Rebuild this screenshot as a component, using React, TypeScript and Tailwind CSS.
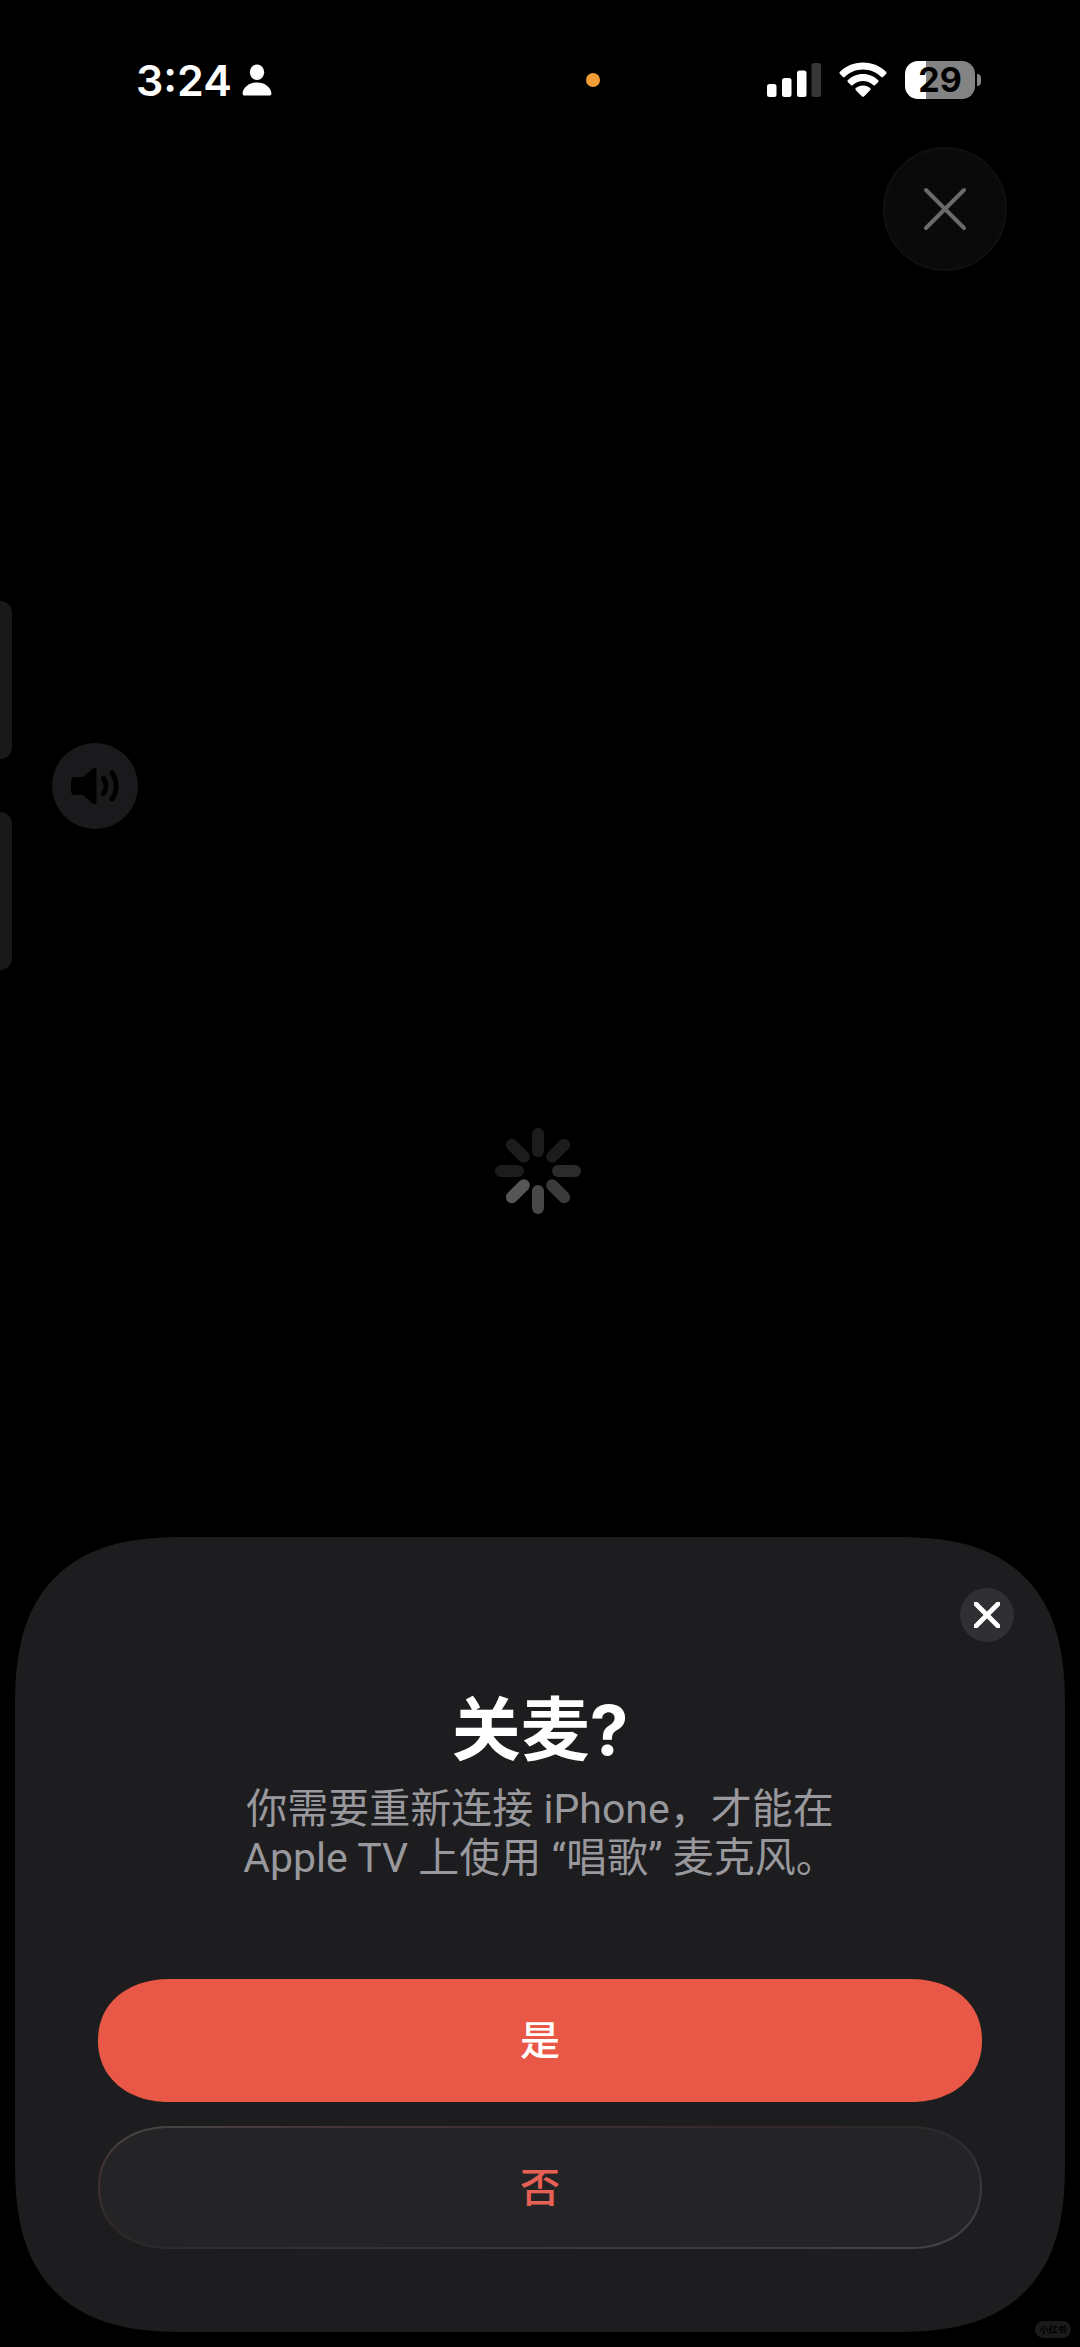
import type { ReactNode } from "react";

const petals = [
    { angle: 0, color: "#1c1c1c" },
    { angle: 45, color: "#1c1c1c" },
    { angle: 90, color: "#2b2b2b" },
    { angle: 135, color: "#3a3a3a" },
    { angle: 180, color: "#484848" },
    { angle: 225, color: "#565656" },
    { angle: 270, color: "#1c1c1c" },
    { angle: 315, color: "#1c1c1c" },
];

function Cross({ className, width }: { className: string; width: number }) {
    return (
        <svg viewBox="0 0 44 44" className={className} fill="none" stroke="currentColor" strokeWidth={width} strokeLinecap="round" aria-hidden="true">
            <path d="M3 3l38 38M41 3L3 41" />
        </svg>
    );
}

function StatusBar() {
    return (
        <header className="flex h-40 items-center pl-[136px] pr-[99px] text-white">
            <time className="text-[43px] leading-none font-semibold">3:24</time>
            <svg viewBox="0 0 30 32" className="ml-[10px] h-8 w-[30px]" fill="currentColor" aria-hidden="true">
                <ellipse cx="15" cy="8.2" rx="7.2" ry="7.8" />
                <path d="M3 31.5C1.200 31.500 .4 30.600 .6 29C1.200 23.500 7 18.500 15 18.500s13.800 5 14.400 10.500c.2 1.600-.6 2.500-2.400 2.500z" />
            </svg>
            <span className="ml-[314px] size-[14px] rounded-full bg-[#f29d38]" />

            <div className="ml-auto flex items-center">
                <svg viewBox="0 0 54 38" className="h-[38px] w-[54px]" fill="currentColor" aria-hidden="true">
                    <rect x="0" y="23" width="9.500" height="13" rx="2.500" />
                    <rect x="15" y="17" width="9.500" height="19" rx="2.500" />
                    <rect x="30" y="9.500" width="9.500" height="26.500" rx="2.500" />
                    <rect x="44.500" y="2" width="9.500" height="34" rx="2.500" fill="#363636" />
                </svg>
                <svg viewBox="0 0 48 38" className="ml-[18px] h-[38px] w-12" fill="currentColor" aria-hidden="true">
                    <path d="M24 1.500C33.500 1.500 41.500 5.200 47 10.800c.7.7.7 1.500 0 2.200l-2.700 2.700c-.7.7-1.500.7-2.200 0C37.500 11.300 31 8.500 24 8.500S10.500 11.300 5.900 15.700c-.7.7-1.500.7-2.200 0L1 13c-.7-.7-.7-1.500 0-2.200C6.500 5.200 14.500 1.500 24 1.500z" />
                    <path d="M24 13c6.200 0 11.200 2.400 15 6 .7.700.7 1.500 0 2.200l-2.800 2.800c-.7.7-1.400.7-2.100.1C31.200 21.500 27.800 20 24 20s-7.200 1.500-10.100 4.100c-.7.6-1.400.6-2.100-.1L9 21.200c-.7-.7-.7-1.500 0-2.200 3.800-3.600 8.800-6 15-6z" />
                    <path d="M24 24.500c2.800 0 5.200 1 7.100 2.600.7.600.7 1.400 0 2.100l-5.900 6c-.8.8-1.600.8-2.400 0l-5.900-6c-.7-.7-.7-1.500 0-2.100 1.900-1.600 4.300-2.600 7.100-2.600z" />
                </svg>
                <div className="ml-[18px] flex h-[38px] w-[70px] items-center justify-center rounded-[13px] bg-linear-to-r from-white from-30% to-[#838383] to-30% text-[34px] leading-none font-bold text-black">
                    29
                </div>
                <span className="ml-[2px] h-3 w-1 rounded-r-full bg-[#838383]" />
            </div>
        </header>
    );
}

function Spinner() {
    return (
        <svg viewBox="-44 -44 88 88" className="mt-[157px] mr-1 size-[88px] self-center" role="status" aria-label="加载中">
            {petals.map((p) => (
                <rect key={p.angle} x="-6" y="-43" width="12" height="29" rx="6" fill={p.color} transform={`rotate(${p.angle})`} />
            ))}
        </svg>
    );
}

function SheetButton({ className, children }: { className: string; children: ReactNode }) {
    return (
        <button
            type="button"
            className={`h-[123px] w-full rounded-full text-[40px] leading-none font-medium supports-[corner-shape:round]:rounded-[72px/61px] supports-[corner-shape:round]:[corner-shape:superellipse(1.1)] ${className}`}
        >
            {children}
        </button>
    );
}

function MicSheet() {
    return (
        <section
            role="dialog"
            aria-labelledby="mic-title"
            className="mx-[15px] mt-auto mb-[15px] flex flex-col rounded-[136px] bg-[#1d1d1f] px-[83px] pt-[51px] pb-[83px] supports-[corner-shape:round]:rounded-[172px] supports-[corner-shape:round]:[corner-shape:superellipse(1.38)]"
        >
            <button type="button" aria-label="关闭" className="-mr-8 flex size-[54px] items-center justify-center self-end rounded-full bg-[#303034] text-white">
                <Cross className="size-[26px]" width={8} />
            </button>

            <h1 id="mic-title" className="mt-12 text-center text-[69px] leading-[80px] font-bold text-white">关麦?</h1>
            <p className="mt-[15px] text-center font-['Roboto','Noto_Sans_CJK_SC',sans-serif] text-[41px] leading-[49px] text-[#98989d]">
                你需要重新连接 iPhone，才能在
                <br />
                Apple TV 上使用 “唱歌” 麦克风。
            </p>

            <div className="mt-24 flex flex-col gap-6">
                <SheetButton className="bg-[#e95846] text-white">是</SheetButton>
                <SheetButton className="border-2 border-transparent text-[#e66153] [background:linear-gradient(#242426,#242426)_padding-box,linear-gradient(to_bottom_right,#4a4a4c,#433334_15%,#33292a_40%,#2a2a2c_50%,#38383a_75%,#444446)_border-box]">
                    否
                </SheetButton>
            </div>
        </section>
    );
}

export default function App() {
    return (
        <div className="relative flex min-h-screen flex-col overflow-hidden bg-black font-['Inter','Noto_Sans_CJK_SC',sans-serif]">
            <StatusBar />

            <button type="button" aria-label="关闭" className="-mt-[13px] mr-[73px] flex size-[124px] items-center justify-center self-end rounded-full border-2 border-[#101010] bg-[#0a0a0a] text-[#6a6a6a]">
                <Cross className="size-11" width={4} />
            </button>

            <div className="mt-[330px] flex items-center gap-10">
                <div className="flex flex-col gap-[53px]">
                    <div className="h-[158px] w-3 rounded-r-xl bg-[#19191a]" />
                    <div className="h-[158px] w-3 rounded-r-xl bg-[#19191a]" />
                </div>
                <button type="button" aria-label="音量" className="flex size-[86px] items-center justify-center rounded-full bg-[#1a1a1c] text-black">
                    <svg viewBox="0 0 48 36" className="h-9 w-12" aria-hidden="true">
                        <path fill="currentColor" d="M4 9h7c.7 0 1.200-.2 1.700-.6l8.300-7.300C21.800.4 22.500 0 23.500 0c1.300 0 2 .8 2 2v32c0 1.200-.7 2-2 2-1 0-1.700-.4-2.500-1.100l-8.300-7.300c-.5-.4-1-.6-1.700-.6H4c-2.500 0-4-1.500-4-4V13c0-2.500 1.500-4 4-4z" />
                        <path fill="none" stroke="currentColor" strokeWidth="5" strokeLinecap="round" d="M32.500 10.500c3.200 4.500 3.200 10.500 0 15M41 5c5.500 7.500 5.500 18.500 0 26" />
                    </svg>
                </button>
            </div>

            <Spinner />
            <MicSheet />

            <span className="absolute right-[9px] bottom-[9px] flex h-[17px] w-9 items-center justify-center rounded-full bg-[#1b1b1b] text-[9px] leading-none font-bold text-black">
                小红书
            </span>
        </div>
    );
}
